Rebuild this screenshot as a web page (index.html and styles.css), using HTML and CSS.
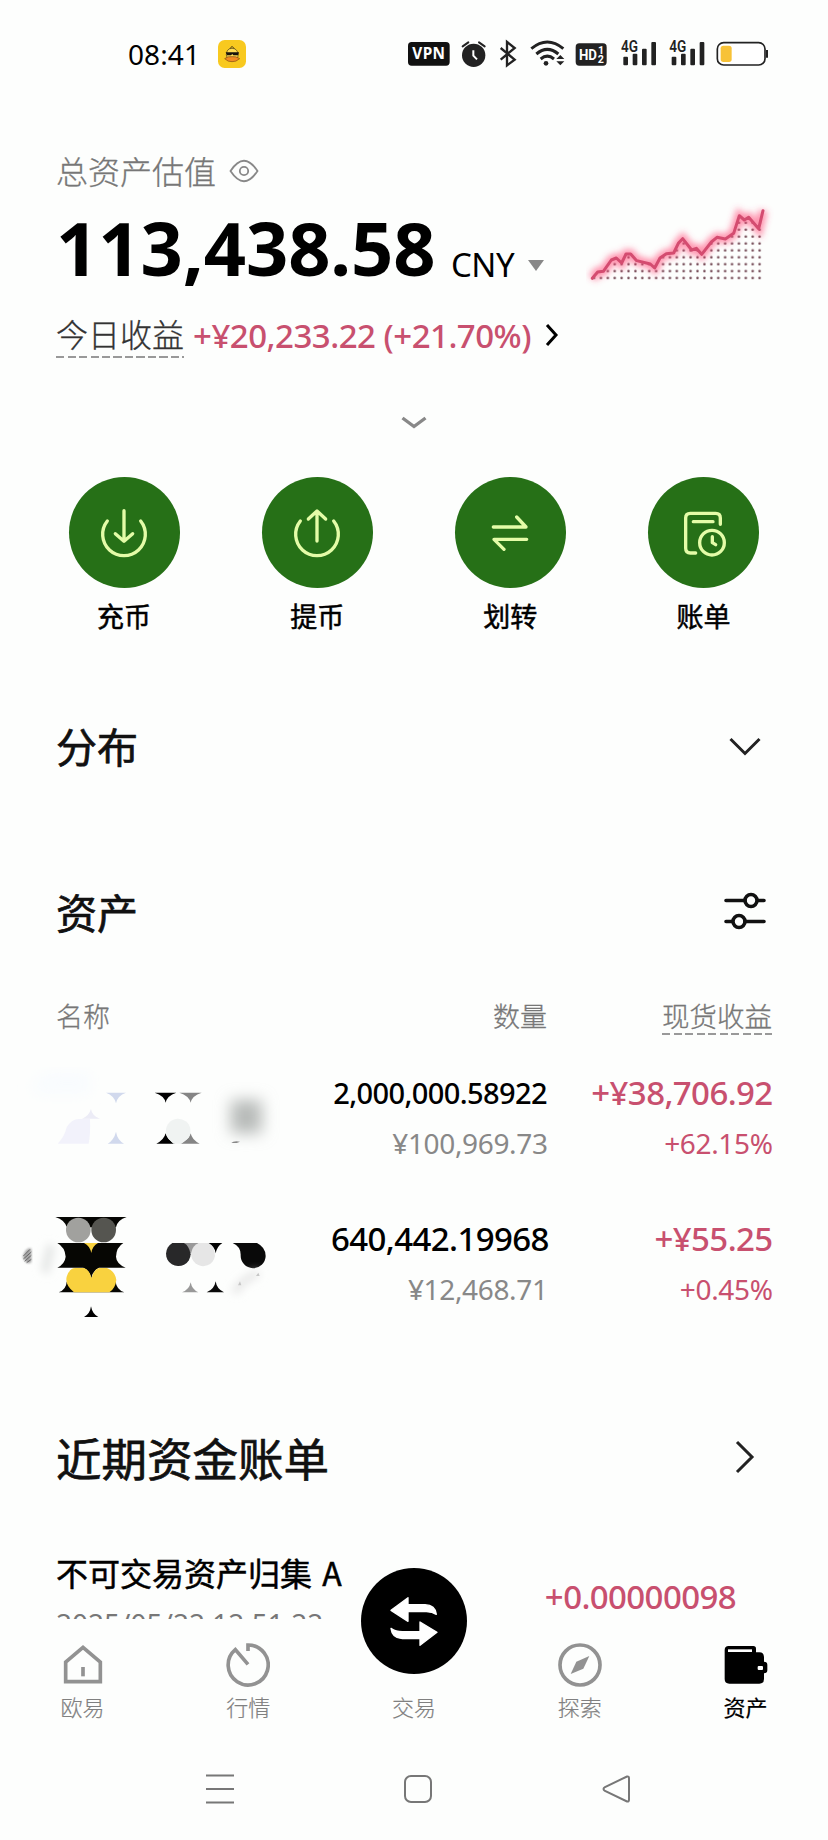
FILE: index.html
```html
<!DOCTYPE html>
<html lang="zh-CN">
<head>
<meta charset="utf-8">
<title>资产</title>
<link rel="stylesheet" href="styles.css">
</head>
<body>
<div class="screen">
  <header class="status">
    <span class="clock">08:41</span>
    <svg class="duck" width="28" height="28" viewBox="0 0 84 84"><rect width="84" height="84" rx="20" fill="#f8c91f"/><path d="M25 44Q26 25 42 25Q58 25 61 44L58 56H28Z" fill="#ffdc55" stroke="#4a3b16" stroke-width="2"/><path d="M36 26L42 19L49 26" fill="none" stroke="#4a3b16" stroke-width="3"/><path d="M23 37H63L60 46H46L43 42L39 46H27Z" fill="#17130d"/><path d="M20 56Q30 48 42 50Q54 48 65 56Q54 66 42 65Q30 66 20 56Z" fill="#f38b22" stroke="#7c4a12" stroke-width="2"/></svg>
    <div class="status-icons">
      <svg width="362" height="30" viewBox="0 0 1086 90">
        <rect x="0" y="9" width="125" height="71" rx="11" fill="#111"/>
        <text class="t-vpn" x="62" y="61" text-anchor="middle" textLength="98">VPN</text>
        <g stroke="#222" stroke-width="6" stroke-linecap="round" fill="none"><path d="M164 22L181 10M213 10L230 22"/></g>
        <circle cx="197" cy="49" r="35" fill="#222"/><path d="M196 34V50L207 61" fill="none" stroke="#fff" stroke-width="6"/>
        <path d="M278 27L320 62L297 79V9L320 27L278 62" fill="none" stroke="#222" stroke-width="7"/>
        <g fill="none" stroke="#222" stroke-width="9"><path d="M370 29Q418 -11 466 29"/><path d="M385 45Q418 17 451 45"/><path d="M398 60Q418 43 438 60"/></g>
        <circle cx="414" cy="73" r="7" fill="#222"/><path d="M445 60L457 48L469 60ZM445 67L457 79L469 67Z" fill="#222"/>
        <rect x="503" y="13" width="93" height="67" rx="11" fill="#222"/>
        <text class="t-hd" x="513" y="64" textLength="54" lengthAdjust="spacingAndGlyphs">HD</text><text class="t-n" x="570" y="44">1</text><text class="t-n" x="569" y="72">2</text>
        <g fill="#222"><rect x="646" y="53" width="14" height="26" rx="3"/><rect x="674" y="44" width="14" height="35" rx="3"/><rect x="702" y="29" width="14" height="50" rx="3"/><rect x="730" y="9" width="14" height="70" rx="3"/>
        <rect x="791" y="53" width="14" height="26" rx="3"/><rect x="819" y="44" width="14" height="35" rx="3"/><rect x="847" y="29" width="14" height="50" rx="3"/><rect x="875" y="9" width="14" height="70" rx="3"/></g>
        <text class="t-4g" x="639" y="40" textLength="51" lengthAdjust="spacingAndGlyphs">4G</text><text class="t-4g" x="784" y="40" textLength="51" lengthAdjust="spacingAndGlyphs">4G</text>
        <rect x="928" y="11" width="143" height="67" rx="19" fill="#fff" stroke="#222" stroke-width="5"/><rect x="938" y="20" width="33" height="49" rx="8" fill="#f7c237"/><path d="M1077 33V56" stroke="#222" stroke-width="6"/>
      </svg>
    </div>
  </header>

  <main class="content">
    <div class="est"><span>总资产估值</span>
      <svg width="30" height="24" viewBox="0 0 30 24" fill="none" stroke="#888" stroke-width="1.8"><path d="M1.500 12Q15-8.500 28.500 12Q15 32.500 1.500 12Z"/><circle cx="15" cy="12" r="4.200"/></svg>
    </div>
    <div class="balance">
      <span class="total">113,438.58</span><span class="ccy">CNY</span>
      <svg class="tri" width="16" height="11" viewBox="0 0 16 11"><path d="M0 0H16L8 11Z" fill="#888"/></svg>
      <svg class="chart" width="190" height="96" viewBox="470 36 570 288">
        <defs>
          <pattern id="dots" x="504.500" y="108" width="20.700" height="20.700" patternUnits="userSpaceOnUse"><circle cx="10.300" cy="11" r="3.800" fill="#6f4450"/></pattern>
          <filter id="glow" x="-10%" y="-20%" width="120%" height="140%"><feGaussianBlur stdDeviation="9"/></filter>
        </defs>
        <path d="M489 265L505 246L522 244L546 210L561 204L577 219L590 192L604 192L622 212L663 222L676 234L692 204L711 191L733 189L747 160L760 146L787 180L801 175L817 193L846 156L863 142L888 147L913 130L930 77L945 90L958 82L988 116L1001 62V272H489Z" fill="url(#dots)"/>
        <path d="M489 265L505 246L522 244L546 210L561 204L577 219L590 192L604 192L622 212L663 222L676 234L692 204L711 191L733 189L747 160L760 146L787 180L801 175L817 193L846 156L863 142L888 147L913 130L930 77L945 90L958 82L988 116L1001 62" fill="none" stroke="#ff4a76" stroke-opacity=".6" stroke-width="28" filter="url(#glow)"/>
        <path d="M489 265L505 246L522 244L546 210L561 204L577 219L590 192L604 192L622 212L663 222L676 234L692 204L711 191L733 189L747 160L760 146L787 180L801 175L817 193L846 156L863 142L888 147L913 130L930 77L945 90L958 82L988 116L1001 62" fill="none" stroke="#d44c70" stroke-width="9" stroke-linejoin="round" stroke-linecap="round"/>
      </svg>
    </div>
    <div class="today"><span class="today-label">今日收益</span><span class="today-val">+¥20,233.22 (+21.70%)</span>
      <svg width="14" height="24" viewBox="0 0 14 24" fill="none" stroke="#000" stroke-width="3"><path d="M2 2L11 12L2 22"/></svg>
    </div>
    <div class="expand"><svg width="26" height="14" viewBox="0 0 26 14" fill="none" stroke="#888" stroke-width="3.400"><path d="M1.500 2L13 10.500L24.500 2"/></svg></div>

    <nav class="actions">
      <div class="action"><div class="disc"><svg width="56" height="56" viewBox="-84 -84 168 168"><path d="M-50-36A64 64 0 1 0 50-36M0-67V24M-26 2L0 25L26 2"/></svg></div><span>充币</span></div>
      <div class="action"><div class="disc"><svg width="56" height="56" viewBox="-84 -84 168 168"><path d="M-50-36A64 64 0 1 0 50-36M0 24V-65M-26-42L0-66L26-42"/></svg></div><span>提币</span></div>
      <div class="action"><div class="disc"><svg width="56" height="56" viewBox="-84 -84 168 168"><path d="M-50-18H48L20-48M50 19H-48L-18 49"/></svg></div><span>划转</span></div>
      <div class="action"><div class="disc"><svg width="56" height="56" viewBox="-84 -84 168 168"><path d="M-22 60H-38Q-52 60-52 46V-45Q-52-59-38-59H38Q52-59 52-45V-26M-29-34H30M28 11V29L38 35"/><circle cx="27" cy="29" r="37"/></svg></div><span>账单</span></div>
    </nav>

    <section class="head head-dist"><h2>分布</h2><svg width="32" height="20" viewBox="0 0 32 20" fill="none" stroke="#222" stroke-width="3"><path d="M1.500 2L16 16.500L30.500 2"/></svg></section>
    <section class="head head-assets"><h2>资产</h2><svg width="42" height="40" viewBox="0 0 42 40" fill="none" stroke="#111" stroke-width="3.600" stroke-linecap="round"><path d="M2 10.500H21M34 10.500H40M2 31.500H8M21 31.500H40"/><circle cx="27" cy="10.500" r="6"/><circle cx="15" cy="31.500" r="6"/></svg></section>

    <div class="cols labels"><span>名称</span><span class="qty">数量</span><span class="gain"><i>现货收益</i></span></div>
    <div class="cols asset">
      <svg class="mosaic" width="300" height="146" viewBox="0 51 900 438">
        <defs><filter id="soft" x="-60%" y="-60%" width="220%" height="220%"><feGaussianBlur stdDeviation="23"/></filter></defs>
        <path d="M115 70H240V130H70V100Z" fill="#f8fbfe" filter="url(#soft)"/>
        <g fill="#d1d9ed"><path d="M288 128H348Q322 137 318 160Q313 137 288 128ZM293 281H342Q322 270 318 245Q312 270 293 281Z"/><path d="M216 206H270Q246 198 243 177Q237 198 216 206Z" fill="#ececf6"/></g>
        <path d="M143 281Q163 262 170 232Q185 207 207 207H240Q242 250 236 281Z" fill="#f2f2fb"/>
        <path d="M434 128H499Q471 137 467 158Q463 137 434 128ZM439 281H495Q471 270 467 250Q462 270 439 281Z" fill="#000"/>
        <path d="M508 128H575Q546 137 542 158Q537 137 508 128ZM511 281H569Q546 270 542 250Q537 270 511 281Z" fill="#858585"/>
        <path d="M477 268A37 37 0 1 1 536 263L514 281H490Z" fill="#f0f3f2"/>
        <rect x="662" y="150" width="94" height="100" fill="#b8bbb9" filter="url(#soft)"/><path d="M664 279Q670 272 690 275L680 279Z" fill="#888"/>
      </svg>
      <div class="qty"><b class="small">2,000,000.58922</b><span>¥100,969.73</span></div>
      <div class="gain"><b>+¥38,706.92</b><span>+62.15%</span></div>
    </div>
    <div class="cols asset">
      <svg class="mosaic" width="300" height="146" viewBox="0 489 900 438">
        <defs><filter id="haze" x="-80%" y="-50%" width="260%" height="200%"><feGaussianBlur stdDeviation="12"/></filter><filter id="edge"><feGaussianBlur stdDeviation="3"/></filter></defs>
        <path d="M112 580L135 590L115 675L92 660Z" fill="#e4e6e5" filter="url(#haze)"/>
        <path d="M38 620Q50 590 64 596V636Q50 648 38 620Z" fill="#a6a6a6" filter="url(#edge)"/><path d="M40 618L60 598M40 627L64 606M44 634L64 616M50 638L64 628" stroke="#444" stroke-width="2"/>
        <path d="M136 501H350Q322 510 318 532H170Q165 510 136 501Z" fill="#060603"/>
        <path d="M168 540Q170 520 172 534L320 534L318 560L282 577H206Z" fill="#fdfefd"/>
        <path d="M225 507H263Q246 517 243 534Q239 517 225 507Z" fill="#060603"/>
        <circle cx="205" cy="540" r="37" fill="#a1a19e"/><circle cx="281" cy="540" r="37" fill="#555550"/>
        <path d="M142 579H340Q319 592 318 620Q319 641 347 653H267Q248 662 244 685Q239 662 220 653H142Q165 641 167 620Q165 592 142 579Z" fill="#060603"/>
        <path d="M222 579H264Q247 588 244 609Q240 588 222 579Z" fill="#f9d23f"/>
        <path d="M146 727Q169 718 170 695H317Q319 718 343 727Z" fill="#060603"/>
        <path d="M192 727Q164 705 170 680Q178 655 196 654H222Q240 661 244 685Q249 661 267 654H291Q315 663 319 690Q316 716 298 727Z" fill="#f9d23f"/>
        <path d="M222 801H265Q247 792 243 769Q240 792 222 801Z" fill="#000"/>
        <path d="M522 579H566L553 610H533Z" fill="#999"/><path d="M487 579H522Q538 588 542 613A37 37 0 1 1 487 579Z" fill="#282829"/>
        <path d="M566 579H597Q615 594 615 618A36 36 0 1 1 566 579Z" fill="#e6e6e6"/>
        <path d="M596 579H637Q620 590 617 610Q615 590 596 579Z" fill="#000"/>
        <path d="M668 579H741Q767 592 767 618A37 37 0 1 1 692 616Q693 590 668 579Z" fill="#090909"/>
        <path d="M516 727H565Q546 719 542 697Q538 719 516 727Z" fill="#999"/><path d="M590 727H642Q620 717 617 694Q613 718 590 727Z" fill="#090909"/>
        <path d="M672 728L700 694L745 668" fill="none" stroke="#e6e6e6" stroke-width="22" filter="url(#haze)"/><path d="M684 706L690 694L694 706ZM738 678L745 668L749 678Z" fill="#c6c6c6"/>
      </svg>
      <div class="qty"><b>640,442.19968</b><span>¥12,468.71</span></div>
      <div class="gain"><b>+¥55.25</b><span>+0.45%</span></div>
    </div>

    <section class="head head-bills"><h2>近期资金账单</h2><svg width="20" height="34" viewBox="0 0 20 34" fill="none" stroke="#222" stroke-width="3"><path d="M2 2L17 17L2 32"/></svg></section>
    <div class="bill">
      <div class="bill-info"><b>不可交易资产归集 A</b><span>2025/05/22 12:51:22</span></div>
      <div class="bill-amt">+0.00000098</div>
    </div>
  </main>

  <footer class="tabs">
    <div class="tab"><svg width="44" height="44" viewBox="-66 -66 132 132"><path d="M-52 50V-9L0-53L52-9V50Z"/><path d="M0 6V34" stroke-width="11"/></svg><span>欧易</span></div>
    <div class="tab"><svg width="44" height="44" viewBox="-66 -66 132 132"><path d="M0-42V-60A60 60 0 1 1-38-46L0-2"/></svg><span>行情</span></div>
    <div class="tab trade"><div class="fab"><svg width="50" height="54" viewBox="0 0 150 162"><g fill="#fff" stroke="#fff" stroke-width="4" stroke-linejoin="round"><path d="M6 49L57 11V32H108Q139 33 142 61Q130 53 112 53H57V82Z"/><path d="M144 115L93 154V134H40Q9 132 6 103Q20 113 40 113H93V84Z"/></g></svg></div><span>交易</span></div>
    <div class="tab"><svg width="44" height="44" viewBox="-66 -66 132 132"><circle r="60"/><path class="fill" d="M28-27L10 11L-28 27L-11-10Z"/></svg><span>探索</span></div>
    <div class="tab on"><svg width="44" height="44" viewBox="-66 -66 132 132"><path class="fill" d="M-64-45Q-64-57-52-57H22Q30-57 30-49V-38H40Q54-38 54-24V-10Q64-10 64-1V16Q64 25 54 25V42Q54 56 40 56H-50Q-64 56-64 42Z"/><path d="M-54-43H18" stroke="#fff" stroke-width="8"/><rect x="35" y="3" width="16" height="12" rx="3" fill="#fff" stroke="none"/></svg><span>资产</span></div>
  </footer>
  <div class="sysnav">
    <svg width="30" height="30" viewBox="0 0 30 30"><path d="M1 1.500H29M1 15H29M1 28.500H29"/></svg>
    <svg width="30" height="30" viewBox="0 0 30 30"><rect x="2" y="2" width="26" height="26" rx="6"/></svg>
    <svg width="30" height="30" viewBox="0 0 30 30"><path d="M26 2.500Q28 2 28 4.500V25.500Q28 28 26 27.500L4 17Q1 15 4 13Z"/></svg>
  </div>
</div>
</body>
</html>
```

FILE: styles.css
```css
* { box-sizing: border-box; }
body { margin: 0; background: #fdfefd; color: #000; font-family: "Noto Sans", "Noto Sans CJK SC", sans-serif; }
svg { display: block; flex: none; }
.screen { width: 828px; height: 1840px; overflow: hidden; display: flex; flex-direction: column; }

.status { height: 107px; flex: none; display: flex; align-items: center; padding: 0 50px 0 128px; }
.clock { font-size: 28px; letter-spacing: .1px; width: 90px; }
.status-icons { margin-left: auto; margin-right: 8px; }
.t-vpn { font: 700 46px "Noto Sans", sans-serif; fill: #fff; }
.t-hd { font: 700 44px "Roboto", sans-serif; fill: #fff; }
.t-n { font: 700 32px "Roboto", sans-serif; fill: #fff; }
.t-4g { font: 600 48px "Roboto", sans-serif; fill: #222; stroke: #fdfefd; stroke-width: 5px; paint-order: stroke; }

.content { height: 1512px; flex: none; overflow: hidden; padding: 41px 56px 0; }
.est { height: 44px; display: flex; align-items: center; gap: 13px; font: 300 32px/44px "Noto Sans CJK SC", sans-serif; color: #777; -webkit-text-stroke: .3px #777; }
.est svg { margin-top: 2px; }
.balance { height: 100px; display: flex; align-items: flex-start; }
.total { font-size: 74px; line-height: 112px; font-weight: 700; letter-spacing: -.1px; width: 395px; white-space: nowrap; }
.ccy { font-size: 33px; line-height: 44px; margin-top: 51px; width: 77px; letter-spacing: -.5px; }
.tri { margin-top: 68px; }
.chart { margin: 10px -4px 0 auto; }
.today { height: 68px; padding-top: 19px; display: flex; align-items: flex-start; }
.today-label { font: 300 32px/44px "Noto Sans CJK SC", sans-serif; color: #333; -webkit-text-stroke: .3px #333; height: 47px; background: repeating-linear-gradient(90deg, #999 0 8px, transparent 8px 11.500px) 0 100% / 100% 2px no-repeat; }
.today-val { font-size: 33px; line-height: 50px; font-weight: 500; color: #c8506f; letter-spacing: -.5px; margin-left: 9px; width: 352px; white-space: nowrap; }
.today svg { margin-top: 12px; }
.expand { height: 117px; padding-top: 56px; display: flex; justify-content: center; }
.actions { display: flex; justify-content: space-between; padding: 0 13px 0 12.500px; height: 192px; }
.action { width: 111px; display: flex; flex-direction: column; align-items: center; font: 400 27px/40px "Noto Sans CJK SC", sans-serif; -webkit-text-stroke: .5px #000; }
.disc { width: 111px; height: 111px; border-radius: 50%; background: #267017; display: grid; place-items: center; margin-bottom: 8px; }
.disc svg { fill: none; stroke: #e4fca8; stroke-width: 10; stroke-linecap: round; stroke-linejoin: round; }

.head { display: flex; align-items: center; justify-content: space-between; }
.head h2 { margin: 0; font: 400 41px/60px "Noto Sans CJK SC", sans-serif; color: #111; -webkit-text-stroke: .7px #111; }
.head-dist { height: 150px; padding: 2px 11px 0 0; }
.head-dist svg { margin-top: 4px; }
.head-assets { height: 180px; padding: 4px 6px 0 0; }
.head-assets svg { margin-bottom: 2px; }
.cols { display: grid; grid-template-columns: 275px 216px 225px; }
.labels { height: 68px; margin: -4px 0 4px; font: 300 27px/42px "Noto Sans CJK SC", sans-serif; color: #777; -webkit-text-stroke: .3px #777; }
.qty, .gain { text-align: right; }
.gain i { font-style: normal; font-size: 27.500px; display: inline-block; height: 39px; line-height: 38px; background: repeating-linear-gradient(90deg, #999 0 8px, transparent 8px 11.500px) 0 100% / 100% 2px no-repeat; }
.asset { height: 146px; }
.mosaic { margin-left: -46px; }
.asset b, .asset span { display: block; line-height: 52px; height: 50px; white-space: nowrap; letter-spacing: -.6px; margin-right: -.6px; }
.asset b { font-size: 33px; font-weight: 500; }
.asset .qty b { margin-right: 0; }
.asset .small { font-size: 29px; }
.asset span { font-size: 28px; letter-spacing: -.35px; color: #888; }
.asset .gain b, .asset .gain span { color: #c8506f; }

.head-bills { height: 196px; margin-bottom: -5px; padding-right: 17px; }
.head-bills h2 { font-size: 45.500px; }
.bill { display: flex; justify-content: space-between; padding-right: 36px; }
.bill b { display: block; font: 400 32px/44px "Noto Sans CJK SC", sans-serif; -webkit-text-stroke: .5px #000; white-space: nowrap; word-spacing: 3px; }
.bill span { display: block; font-size: 28px; line-height: 40px; color: #777; white-space: nowrap; margin-top: 9px; }
.bill-amt { font-size: 33px; line-height: 50px; font-weight: 500; color: #c8506f; letter-spacing: -.6px; margin-top: 22px; }

.tabs { height: 111px; flex: none; display: flex; justify-content: space-between; padding: 24px 27px 0; }
.tab { width: 111px; display: flex; flex-direction: column; align-items: center; font: 300 22px/30px "Noto Sans CJK SC", sans-serif; color: #808080; -webkit-text-stroke: .2px currentColor; }
.tab > svg { fill: none; stroke: #929292; stroke-width: 11; margin-bottom: 4px; }
.tab .fill { fill: #929292; stroke: none; }
.on { color: #000; font-weight: 400; }
.on .fill { fill: #000; }
.fab { width: 106px; height: 106px; border-radius: 50%; background: #000; display: grid; place-items: center; margin: -75px 0 17px; flex: none; position: relative; }
.sysnav { flex: 1; display: flex; padding: 44px 197px 0 205px; justify-content: space-between; }
.sysnav svg { fill: none; stroke: #777; stroke-width: 2; }
```
